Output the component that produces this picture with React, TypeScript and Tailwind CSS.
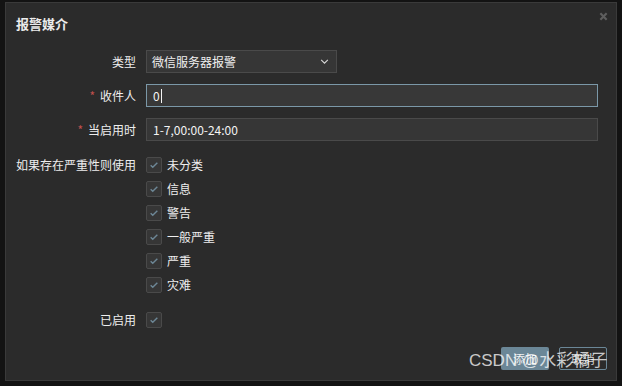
import React from "react";

const font = { fontFamily: '"Noto Sans CJK SC", "Noto Sans", sans-serif' };

const Check = () => (
  <span className="flex h-4 w-4 shrink-0 items-center justify-center rounded-[2px] border border-[#4a4a4a] bg-[#363636]">
    <svg viewBox="0 0 12 12" className="h-[10px] w-[10px]">
      <path d="M2 6.3l2.5 2.5L10 3.3" fill="none" stroke="#6d8796" strokeWidth="1.7" />
    </svg>
  </span>
);

const severities = ["未分类", "信息", "警告", "一般严重", "严重", "灾难"];

export default function App() {
  return (
    <div className="relative h-[386px] w-[622px] overflow-hidden bg-[#131313] pl-[5px] pt-[2px] text-[12px] text-[#eeeeee]" style={font}>
      <div className="flex h-[379px] w-[612px] flex-col border border-[#3a3a3a] bg-[#2b2b2b]">
        {/* header */}
        <div className="flex items-start justify-between pl-[10px] pr-[8px] pt-[12px]">
          <h2 className="text-[13px] font-bold leading-[18px] text-[#ececec]">报警媒介</h2>
          <svg viewBox="0 0 10 10" className="-mt-[3px] h-[9px] w-[9px]">
            <path d="M1.5 1.5l7 7M8.5 1.5l-7 7" stroke="#5e5e5e" strokeWidth="2.4" />
          </svg>
        </div>

        {/* form */}
        <div className="mt-[17px] grid grid-cols-[130px_1fr] gap-x-[10px] gap-y-[11px] pr-[18px]">
          <label className="self-center text-right leading-[23px]">类型</label>
          <div className="flex h-[23px] w-[191px] items-center justify-between border border-[#4a4a4a] bg-[#363636] pl-[5px] pr-[7px] text-[#f0f0f0]">
            <span>微信服务器报警</span>
            <svg viewBox="0 0 10 6" className="h-[5px] w-[9px]">
              <path d="M1 1l4 4 4-4" fill="none" stroke="#d8d8d8" strokeWidth="1.3" />
            </svg>
          </div>

          <label className="self-center text-right leading-[23px]">
            <span className="mr-[5px] text-[#c0504d]">*</span>收件人
          </label>
          <div className="flex h-[23px] items-center border border-[#7b98a8] bg-[#383838] pl-[6px] text-[#f4f4f4]">
            <span>0</span>
            <span className="ml-[1px] h-[14px] w-px bg-[#f4f4f4]" />
          </div>

          <label className="self-center text-right leading-[23px]">
            <span className="mr-[5px] text-[#c0504d]">*</span>当启用时
          </label>
          <div className="flex h-[23px] items-center border border-[#4a4a4a] bg-[#363636] pl-[6px] text-[#f4f4f4]">
            1-7,00:00-24:00
          </div>

          <label className="mt-[5px] text-right leading-[16px]">如果存在严重性则使用</label>
          <div className="mt-[5px] flex flex-col gap-[8px]">
            {severities.map((s) => (
              <div key={s} className="flex items-center gap-[5px] leading-[16px]">
                <Check />
                <span>{s}</span>
              </div>
            ))}
          </div>

          <label className="mt-[8px] text-right leading-[16px]">已启用</label>
          <div className="mt-[8px]">
            <Check />
          </div>
        </div>

        {/* footer */}
        <div className="mt-[19px] flex justify-end gap-[10px] pr-[9px]">
          <button className="h-[23px] w-[48px] rounded-[2px] bg-[#6b8797] text-[12px] text-[#f2f2f2]">添加</button>
          <button className="h-[23px] w-[48px] rounded-[2px] border border-[#6b8797] text-[12px] text-[#d8d8d8]">取消</button>
        </div>
      </div>

      {/* watermark */}
      <span
        className="pointer-events-none absolute left-[469px] top-[350px] text-[17px] leading-[22px] text-white/75"
        style={{ fontFamily: '"Liberation Sans", "Noto Sans CJK SC", sans-serif' }}
      >
        CSDN @水彩橘子
      </span>
    </div>
  );
}
